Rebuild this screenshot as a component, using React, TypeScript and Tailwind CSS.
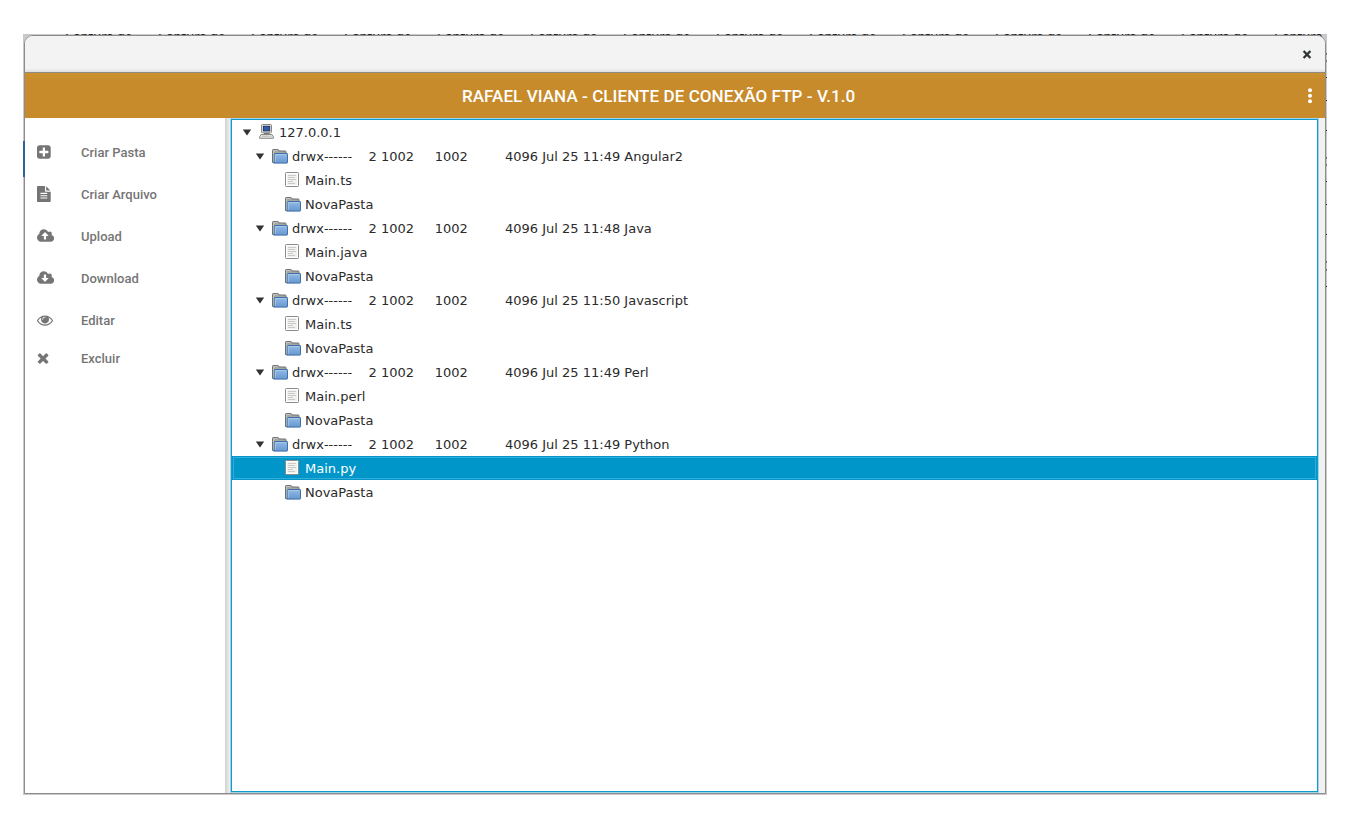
import type { ReactNode } from "react";

const CLOUD =
  "M1856 1152q0 159-112.5 271.5t-271.5 112.5h-1088q-185 0-316.5-131.5t-131.5-316.5q0-130 70-240t188-165q-2-30-2-43 0-212 150-362t362-150q156 0 285.5 87t188.5 231q71-62 166-62 106 0 181 75t75 181q0 76-41 138 130 31 213.5 135.5t83.5 238.5z";

type MenuItem = { label: string; box: string; width: number; d: string; row: string };

const menu: MenuItem[] = [
  {
    label: "Criar Pasta",
    box: "128 0 1536 1792",
    width: 13.72,
    row: "h-[42px]",
    d: "M1408 960v-128q0-26-19-45t-45-19h-320v-320q0-26-19-45t-45-19h-128q-26 0-45 19t-19 45v320h-320q-26 0-45 19t-19 45v128q0 26 19 45t45 19h320v320q0 26 19 45t45 19h128q26 0 45-19t19-45v-320h320q26 0 45-19t19-45zm256-544v960q0 119-84.5 203.5t-203.5 84.5h-960q-119 0-203.5-84.5t-84.5-203.5v-960q0-119 84.5-203.5t203.5-84.5h960q119 0 203.5 84.5t84.5 203.5z",
  },
  {
    label: "Criar Arquivo",
    box: "128 0 1536 1792",
    width: 13.72,
    row: "h-[42px]",
    d: "M1596 476q14 14 28 36h-472v-472q22 14 36 28zm-476 164h544v1056q0 40-28 68t-68 28h-1344q-40 0-68-28t-28-68v-1600q0-40 28-68t68-28h800v544q0 40 28 68t68 28zm160 736v-64q0-14-9-23t-23-9h-704q-14 0-23 9t-9 23v64q0 14 9 23t23 9h704q14 0 23-9t9-23zm0-256v-64q0-14-9-23t-23-9h-704q-14 0-23 9t-9 23v64q0 14 9 23t23 9h704q14 0 23-9t9-23zm0-256v-64q0-14-9-23t-23-9h-704q-14 0-23 9t-9 23v64q0 14 9 23t23 9h704q14 0 23-9t9-23z",
  },
  {
    label: "Upload",
    box: "-64 0 1920 1792",
    width: 17.14,
    row: "h-[42px]",
    d:
      "M1216 864q0-14-9-23l-352-352q-9-9-23-9t-23 9l-351 351q-10 12-10 24 0 14 9 23t23 9h224v352q0 13 9.5 22.5t22.5 9.5h192q13 0 22.5-9.5t9.5-22.5v-352h224q13 0 22.5-9.5t9.5-22.5z" +
      CLOUD,
  },
  {
    label: "Download",
    box: "-64 0 1920 1792",
    width: 17.14,
    row: "h-[42px]",
    d:
      "M1216 928q0-14-9-23t-23-9h-224v-352q0-13-9.5-22.5t-22.5-9.5h-192q-13 0-22.5 9.5t-9.5 22.5v352h-224q-13 0-22.5 9.5t-9.5 22.5q0 14 9 23l352 352q9 9 23 9t23-9l351-351q10-12 10-24z" +
      CLOUD,
  },
  {
    label: "Editar",
    box: "0 0 1792 1792",
    width: 16,
    row: "h-[42px]",
    d: "M1664 960q-152-236-381-353 61 104 61 225 0 185-131.5 316.5t-316.5 131.5-316.5-131.5-131.5-316.5q0-121 61-225-229 117-381 353 133 205 333.5 326.5t434.5 121.5 434.5-121.5 333.5-326.5zm-720-384q0-20-14-34t-34-14q-125 0-214.5 89.5t-89.5 214.5q0 20 14 34t34 14 34-14 14-34q0-86 61-147t147-61q20 0 34-14t14-34zm848 384q0 34-20 69-140 230-376.5 368.5t-499.5 138.5-499.5-139-376.5-368q-20-35-20-69t20-69q140-229 376.5-368t499.5-139 499.5 139 376.5 368q20 35 20 69z",
  },
  {
    label: "Excluir",
    box: "215 0 1408 1792",
    width: 12.57,
    row: "h-[34px]",
    d: "M1490 1322q0 40-28 68l-136 136q-28 28-68 28t-68-28l-294-294-294 294q-28 28-68 28t-68-28l-136-136q-28-28-28-68t28-68l294-294-294-294q-28-28-28-68t28-68l136-136q28-28 68-28t68 28l294 294 294-294q28-28 68-28t68 28l136 136q28 28 28 68t-28 68l-294 294 294 294q28 28 28 68z",
  },
];

const folders = [
  { time: "11:49", name: "Angular2", file: "Main.ts" },
  { time: "11:48", name: "Java", file: "Main.java" },
  { time: "11:50", name: "Javascript", file: "Main.ts" },
  { time: "11:49", name: "Perl", file: "Main.perl" },
  { time: "11:49", name: "Python", file: "Main.py", selected: true },
];

function FolderIcon() {
  return (
    <svg width="16" height="16" viewBox="0 0 16 16" className="shrink-0">
      <defs>
        <linearGradient id="folderFront" x1="0" y1="0" x2="0" y2="1">
          <stop offset="0" stopColor="#93bae6" />
          <stop offset="1" stopColor="#6698d0" />
        </linearGradient>
      </defs>
      <path d="M.5 14.5V2.2q0-.7.7-.7h4.6q.6 0 .8.6l.4.9h6.3q.7 0 .7.7v10.8z" fill="#a5a7a4" stroke="#70726e" />
      <path d="M1.5 13.5v-11h4" fill="none" stroke="#c4c6c3" />
      <path d="M3 5.5h12q.5 0 .5.6v8.4q0 .6-.6.6H1.6q.6-.4.6-1.5V6.4q0-.9.8-.9z" fill="url(#folderFront)" stroke="#3f6faa" />
      <path d="M3.3 13.6V6.5h11.2" fill="none" stroke="#a9c9ec" strokeWidth=".9" />
    </svg>
  );
}

function FileIcon() {
  return (
    <svg width="16" height="16" viewBox="0 0 16 16" className="shrink-0">
      <rect x=".5" y=".5" width="13" height="14" rx=".8" fill="#f1f1f0" stroke="#898b87" />
      <rect x="1.5" y="1.5" width="11" height="12" fill="none" stroke="#fff" />
      <path d="M3 3.5h8M3 5.5h7M3 7.5h8M3 9.5h5M3 11.5h7" stroke="#cbcbca" />
    </svg>
  );
}

function ComputerIcon() {
  return (
    <svg width="16" height="16" viewBox="0 0 16 16" className="shrink-0">
      <rect x="2.5" y=".5" width="10" height="8.3" rx="1" fill="#dededb" stroke="#858783" />
      <rect x="4.4" y="2.3" width="6.3" height="4.6" fill="#3159a4" stroke="#182f64" strokeWidth=".9" />
      <path d="M5 9h5.5v1H5z" fill="#777975" />
      <path d="M2 10.5h11l1.5 2.6v1.2H.6v-1.2z" fill="#e7e7e4" stroke="#888a85" />
      <path d="M3 12.2h6.5M10.5 12.2h2" stroke="#b0b2ad" />
    </svg>
  );
}

function Row({ level, open, icon, text, selected }: { level: string; open?: boolean; icon: ReactNode; text: string; selected?: boolean }) {
  return (
    <div
      className={`flex h-6 items-center ${level} ${
        selected ? "border border-[#0096c9] bg-[#0096c9] text-white outline outline-1 -outline-offset-2 outline-[#35acd6]" : "border border-transparent text-[#2b2b2b]"
      }`}
    >
      <span className="flex w-[17px] shrink-0">
        {open && (
          <svg width="10" height="8" viewBox="0 0 10 8">
            <path d="M.8 1.6h8.4L5 7.6z" fill="#333" />
          </svg>
        )}
      </span>
      {icon}
      <span className="ml-1 pt-[2px] whitespace-pre">{text}</span>
    </div>
  );
}

export default function App() {
  return (
    <div className="flex h-[830px] w-[1350px] overflow-hidden bg-white pt-[34px] pl-[23px]">
      <div className="relative h-[761px] w-[1304px] overflow-hidden bg-[#c9c9c9] p-px">
        <div className="absolute top-0 left-[42px] flex h-[3px] w-[1262px] overflow-hidden font-['Noto_Sans',sans-serif] text-[13px] leading-[13px] text-[#222]">
          {Array.from({ length: 14 }, (_, i) => (
            <span key={i} className="-mt-[4px] w-[93px] shrink-0 whitespace-nowrap">
              {i === 13 ? "Captura" : "Captura de"}
            </span>
          ))}
        </div>
        <svg className="absolute top-0 right-0" width="2" height="270" viewBox="0 0 2 270">
          <path
            d="M0 20h2M0 27h2M0 43.5h2M0 66.5h2M0 96.5h2M0 124h2M0 131h2M0 147.5h2M0 170.5h2M0 200.5h2M0 228h2M0 236h2M0 252.5h2"
            stroke="#333"
          />
        </svg>
        <div className="relative flex h-[759px] w-[1302px] flex-col overflow-hidden rounded-t-[9px] border border-[#8c8c8c] bg-[#f1f1f1]">
          <div className="flex h-9 shrink-0 items-center justify-end bg-gradient-to-b from-[#f3f3f3] from-90% to-[#dfdfdf] pr-[13px]">
            <svg width="10" height="9" viewBox="0 0 10 9">
              <path d="M1.6 1l6.8 7M8.4 1L1.6 8" stroke="#2e3436" strokeWidth="2.3" />
            </svg>
          </div>
          <div className="relative flex h-[46px] shrink-0 items-center border-t border-[#8f8a82] bg-gradient-to-b from-[#cc912e] to-[#c78b2b] to-20%">
            <h1 className="flex-1 pt-[1px] pl-[437px] font-['Roboto',sans-serif] text-[17px] leading-6 font-medium tracking-[0.075px] whitespace-nowrap text-white">
              RAFAEL VIANA - CLIENTE DE CONEXÃO FTP - V.1.0
            </h1>
            <svg width="4" height="16" viewBox="0 0 4 16" className="mr-[13px]">
              <circle cx="2" cy="2.3" r="2" fill="#fff" />
              <circle cx="2" cy="7.8" r="2" fill="#fff" />
              <circle cx="2" cy="13.3" r="2" fill="#fff" />
            </svg>
          </div>
          <div className="flex min-h-0 flex-1">
            <nav className="w-[200px] shrink-0 bg-white pt-[13px] font-['Roboto',sans-serif] text-[13px] font-medium text-[#757575]">
              {menu.map((m) => (
                <div key={m.label} className={`flex items-center pl-3 ${m.row}`}>
                  <span className="flex w-11">
                    <svg width={m.width} height="16" viewBox={m.box} fill="currentColor" fillRule="evenodd">
                      <path d={m.d} />
                    </svg>
                  </span>
                  <span className="pt-[2px]">{m.label}</span>
                </div>
              ))}
            </nav>
            <div className="w-[5px] shrink-0 bg-gradient-to-r from-[#d2d2d2] to-[#f0f0f0]" />
            <main className="flex w-[1089px] shrink-0 border border-[#9fd5ea]">
              <div className="flex-1 border border-[#0f9bcb] bg-white font-['DejaVu_Sans',sans-serif] text-[13px]">
                <Row level="pl-[9px]" open icon={<ComputerIcon />} text="127.0.0.1" />
                {folders.map((f) => (
                  <div key={f.name}>
                    <Row level="pl-[22px]" open icon={<FolderIcon />} text={`drwx------    2 1002     1002         4096 Jul 25 ${f.time} ${f.name}`} />
                    <Row level="pl-[35px]" icon={<FileIcon />} text={f.file} selected={f.selected} />
                    <Row level="pl-[35px]" icon={<FolderIcon />} text="NovaPasta" />
                  </div>
                ))}
              </div>
            </main>
          </div>
        </div>
        <div className="absolute top-[107px] left-0 h-9 w-[2px] bg-[#2f6296]" />
      </div>
    </div>
  );
}
